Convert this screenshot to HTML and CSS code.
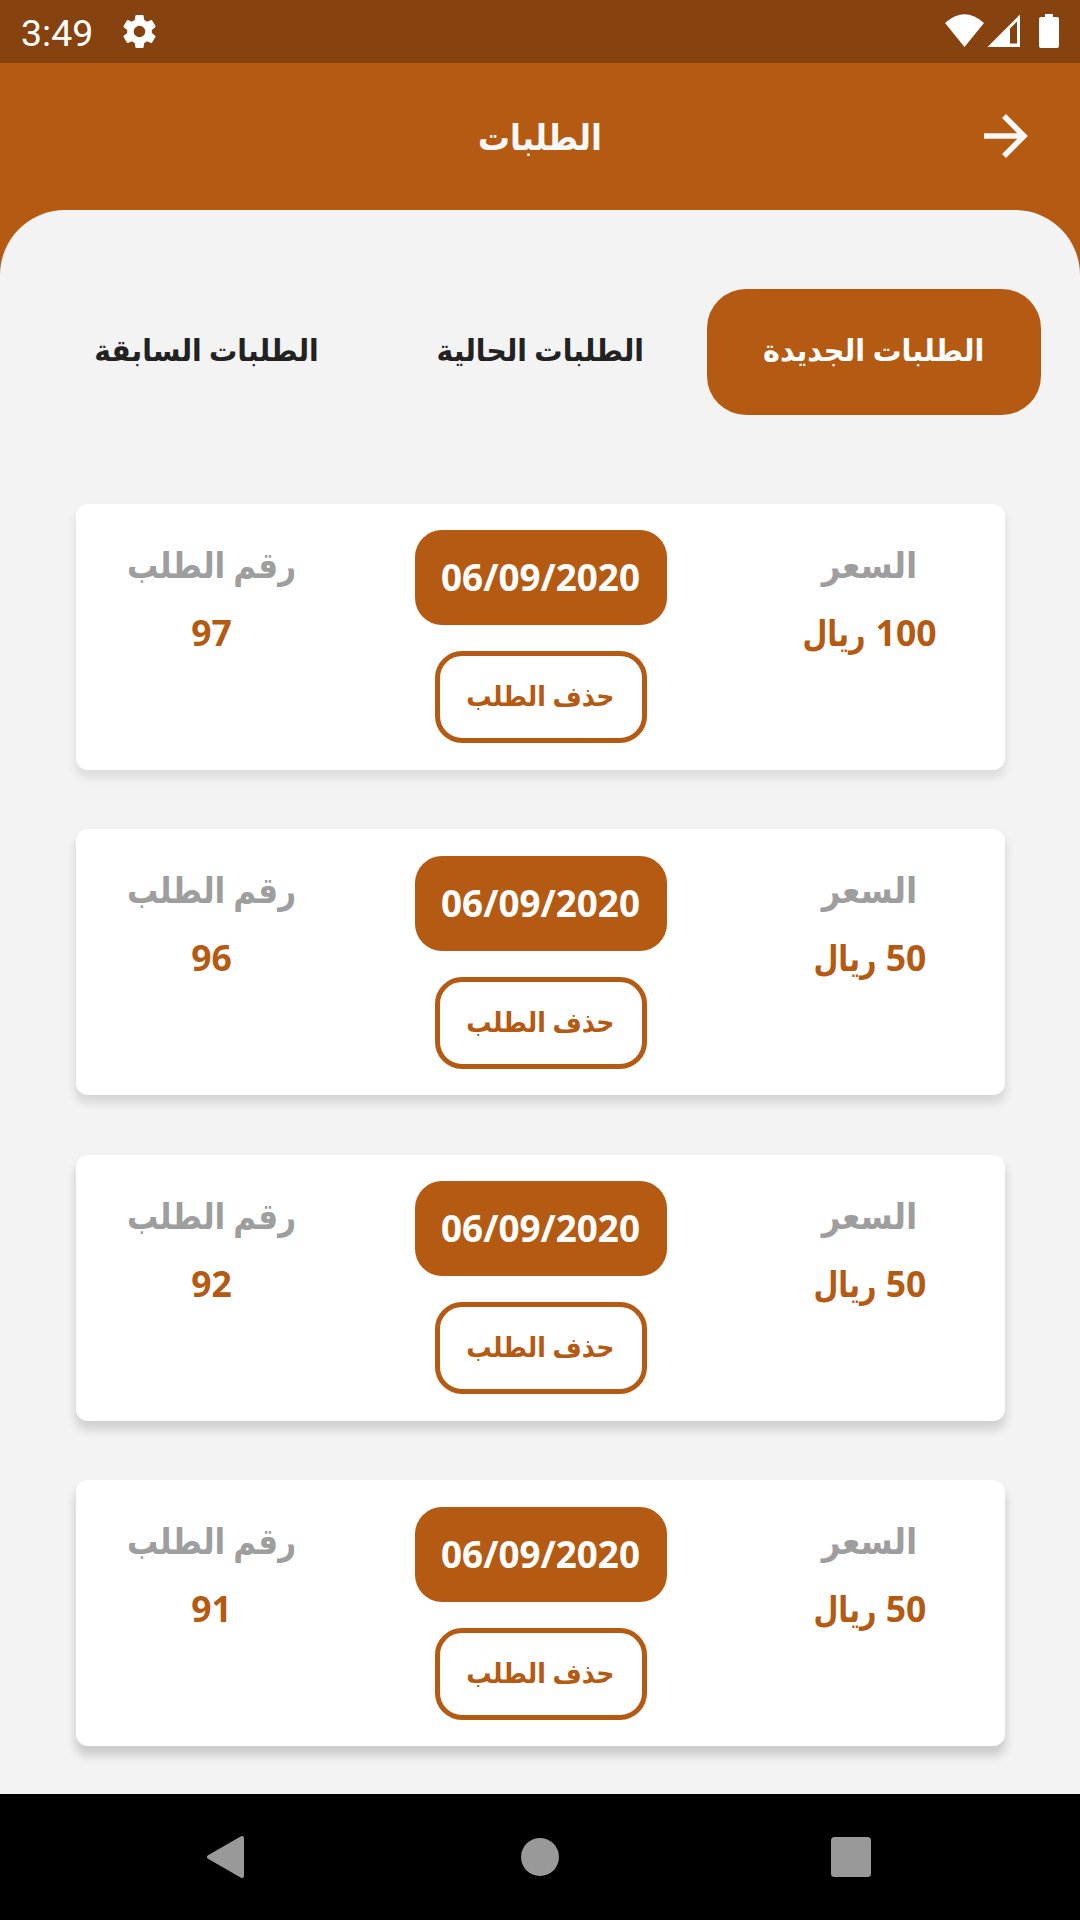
FILE: index.html
```html
<!DOCTYPE html>
<html lang="ar" dir="rtl">
<head>
    <meta charset="UTF-8">
    <meta name="viewport" content="width=device-width, initial-scale=1.0">
    <title>الطلبات</title>
    <link rel="stylesheet" href="styles.css">
</head>
<body>
    <div class="status-bar" dir="ltr">
        <span class="clock">3:49</span>
        <svg class="gear" viewBox="2 2 20 20"><path fill="#fff" fill-rule="evenodd" d="M19.43 12.98c.04-.32.07-.64.07-.98s-.03-.66-.07-.98l2.11-1.65c.19-.15.24-.42.12-.64l-2-3.46c-.12-.22-.39-.3-.61-.22l-2.49 1c-.52-.4-1.08-.73-1.69-.98l-.38-2.65C14.46 2.18 14.25 2 14 2h-4c-.25 0-.46.18-.49.42l-.38 2.65c-.61.25-1.17.59-1.69.98l-2.49-1c-.23-.09-.49 0-.61.22l-2 3.46c-.13.22-.07.49.12.64l2.11 1.65c-.04.32-.07.65-.07.98s.03.66.07.98l-2.11 1.65c-.19.15-.24.42-.12.64l2 3.46c.12.22.39.3.61.22l2.49-1c.52.4 1.08.73 1.69.98l.38 2.65c.03.24.24.42.49.42h4c.25 0 .46-.18.49-.42l.38-2.65c.61-.25 1.17-.59 1.69-.98l2.49 1c.23.09.49 0 .61-.22l2-3.46c.12-.22.07-.49-.12-.64zM12 15.5A3.5 3.5 0 1 1 12 8.5a3.5 3.5 0 0 1 0 7z"/></svg>
        <svg class="signals" viewBox="0 0 115 35">
            <path fill="#fff" d="M0 9Q19.500-8.500 39 9L19.500 33Z"/>
            <path fill="#fff" fill-rule="evenodd" d="M42.500 33L75 .5V33ZM65 14.500V29.500H72V7.500Z"/>
            <path fill="#fff" d="M100 0h8v3h4q2 0 2 2v27q0 2-2 2H96q-2 0-2-2V5q0-2 2-2h4z"/>
        </svg>
    </div>
    <div class="header">
        <h1 class="title">الطلبات</h1>
        <svg class="arrow" viewBox="0 0 44 44"><path fill="none" stroke="#f8f8f8" stroke-width="5.500" d="M0 22H39M20 2L40 22L20 42"/></svg>
    </div>
    <div class="sheet-wrap">
        <div class="sheet">
            <div class="tabs">
                <div class="tab active"><span>الطلبات الجديدة</span></div>
                <div class="tab"><span>الطلبات الحالية</span></div>
                <div class="tab"><span>الطلبات السابقة</span></div>
            </div>
            <div class="orders">
                <div class="card">
                    <div class="col">
                        <div class="label price">السعر</div>
                        <div class="value">100 <span class="unit">ريال</span></div>
                    </div>
                    <div class="middle">
                        <div class="date">06/09/2020</div>
                        <div class="delete"><span>حذف الطلب</span></div>
                    </div>
                    <div class="col">
                        <div class="label">رقم الطلب</div>
                        <div class="value">97</div>
                    </div>
                </div>
                <div class="card">
                    <div class="col">
                        <div class="label price">السعر</div>
                        <div class="value">50 <span class="unit">ريال</span></div>
                    </div>
                    <div class="middle">
                        <div class="date">06/09/2020</div>
                        <div class="delete"><span>حذف الطلب</span></div>
                    </div>
                    <div class="col">
                        <div class="label">رقم الطلب</div>
                        <div class="value">96</div>
                    </div>
                </div>
                <div class="card">
                    <div class="col">
                        <div class="label price">السعر</div>
                        <div class="value">50 <span class="unit">ريال</span></div>
                    </div>
                    <div class="middle">
                        <div class="date">06/09/2020</div>
                        <div class="delete"><span>حذف الطلب</span></div>
                    </div>
                    <div class="col">
                        <div class="label">رقم الطلب</div>
                        <div class="value">92</div>
                    </div>
                </div>
                <div class="card">
                    <div class="col">
                        <div class="label price">السعر</div>
                        <div class="value">50 <span class="unit">ريال</span></div>
                    </div>
                    <div class="middle">
                        <div class="date">06/09/2020</div>
                        <div class="delete"><span>حذف الطلب</span></div>
                    </div>
                    <div class="col">
                        <div class="label">رقم الطلب</div>
                        <div class="value">91</div>
                    </div>
                </div>
            </div>
        </div>
    </div>
    <div class="nav-bar" dir="ltr">
        <svg class="nav-icon" viewBox="0 0 44 44"><path fill="#999" stroke="#999" stroke-width="4" stroke-linejoin="round" d="M2 22L35 3V41Z"/></svg>
        <svg class="nav-icon" viewBox="0 0 44 44"><circle fill="#999" cx="22" cy="22" r="19"/></svg>
        <svg class="nav-icon" viewBox="0 0 44 44"><rect fill="#999" x="2" y="2" width="40" height="40" rx="3.500"/></svg>
    </div>
</body>
</html>
```
FILE: styles.css
```css
* {
    box-sizing: border-box;
}

body {
    margin: 0;
    width: 1080px;
    height: 1920px;
    display: flex;
    flex-direction: column;
    overflow: hidden;
    background: #f3f3f3;
    font-family: "Noto Sans", "DejaVu Sans", sans-serif;
    font-weight: bold;
}

.status-bar {
    height: 63px;
    flex: none;
    display: flex;
    align-items: center;
    padding: 0 20px 0 21px;
    background: #86420f;
}

.clock {
    width: 102px;
    font-family: Roboto, sans-serif;
    font-size: 37.5px;
    font-weight: normal;
    line-height: 63px;
    padding-top: 3px;
    color: #fff;
}

.gear {
    width: 33px;
    height: 33px;
}

.signals {
    width: 115px;
    height: 35px;
    margin-left: auto;
    margin-bottom: 1px;
}

/* Header */
.header {
    height: 147px;
    flex: none;
    display: grid;
    grid-template-columns: 96px 1fr 96px;
    align-items: center;
    background: #b55a12;
}

.arrow {
    grid-column: 1;
    grid-row: 1;
    width: 44px;
    height: 44px;
    margin-right: 52px;
    margin-bottom: 1px;
}

.title {
    grid-column: 2;
    grid-row: 1;
    margin: 0;
    font-size: 36px;
    line-height: 50px;
    text-align: center;
    color: #f8f8f8;
    transform: scaleX(0.885);
}

.sheet-wrap {
    flex: 1;
    min-height: 0;
    background: linear-gradient(#b55a12 80px, #f3f3f3 80px);
}

.sheet {
    height: 100%;
    padding: 79px 39px 0;
    border-radius: 65px 65px 0 0;
    background: #f3f3f3;
}

/* Tabs */
.tabs {
    display: flex;
    height: 126px;
}

.tab {
    flex: 1;
    display: flex;
    align-items: center;
    justify-content: center;
    padding-bottom: 5px;
    border-radius: 39px;
    font-size: 30px;
    white-space: nowrap;
    color: #222;
}

.tab span {
    transform: scaleX(0.94);
}

.tab.active {
    background: #b55a12;
    color: #fff;
}

.tab.active span {
    transform: scaleX(0.957);
}

/* Order cards */
.orders {
    display: flex;
    flex-direction: column;
    gap: 59.4px;
    padding: 89px 36px 0 37px;
}

.card {
    display: flex;
    justify-content: space-between;
    height: 266px;
    flex: none;
    border-radius: 12px;
    background: #fff;
    box-shadow: 0 7px 10px 1px rgba(0, 0, 0, 0.09);
}

/* shadows get darker down the list */
.card:nth-child(2) {
    box-shadow: 0 7px 10px 1px rgba(0, 0, 0, 0.12);
}

.card:nth-child(3) {
    box-shadow: 0 8px 10px 1px rgba(0, 0, 0, 0.14);
}

.card:nth-child(4) {
    box-shadow: 0 9px 10px 1px rgba(0, 0, 0, 0.16);
}

.col {
    width: 271px;
    padding-top: 33px;
    text-align: center;
    white-space: nowrap;
}

.label {
    height: 60px;
    font-size: 36px;
    line-height: 56px;
    color: #9e9e9e;
    transform: scaleX(0.865);
}

.label.price {
    transform: scaleX(0.907);
}

.value {
    font-size: 35.5px;
    line-height: 70px;
    color: #b55a12;
}

.unit {
    display: inline-block;
    margin: 0 -7px;
    transform: scaleX(0.81);
}

.middle {
    display: flex;
    flex-direction: column;
    align-items: center;
    gap: 26px;
    padding-top: 26.4px;
}

.date {
    width: 252px;
    height: 95px;
    border-radius: 27px;
    background: #b55a12;
    color: #fff;
    font-size: 36.8px;
    line-height: 95px;
    text-align: center;
    direction: ltr;
}

.delete {
    width: 212px;
    height: 92px;
    border: 5px solid #b55a12;
    border-radius: 27px;
    color: #b55a12;
    font-size: 28px;
    line-height: 79px;
    text-align: center;
    white-space: nowrap;
}

.delete span {
    display: inline-block;
    transform: scaleX(0.9);
}

/* Navigation */
.nav-bar {
    height: 126px;
    flex: none;
    display: flex;
    align-items: center;
    justify-content: space-between;
    padding: 0 207px;
    background: #000;
}

.nav-icon {
    width: 44px;
    height: 44px;
}
```
